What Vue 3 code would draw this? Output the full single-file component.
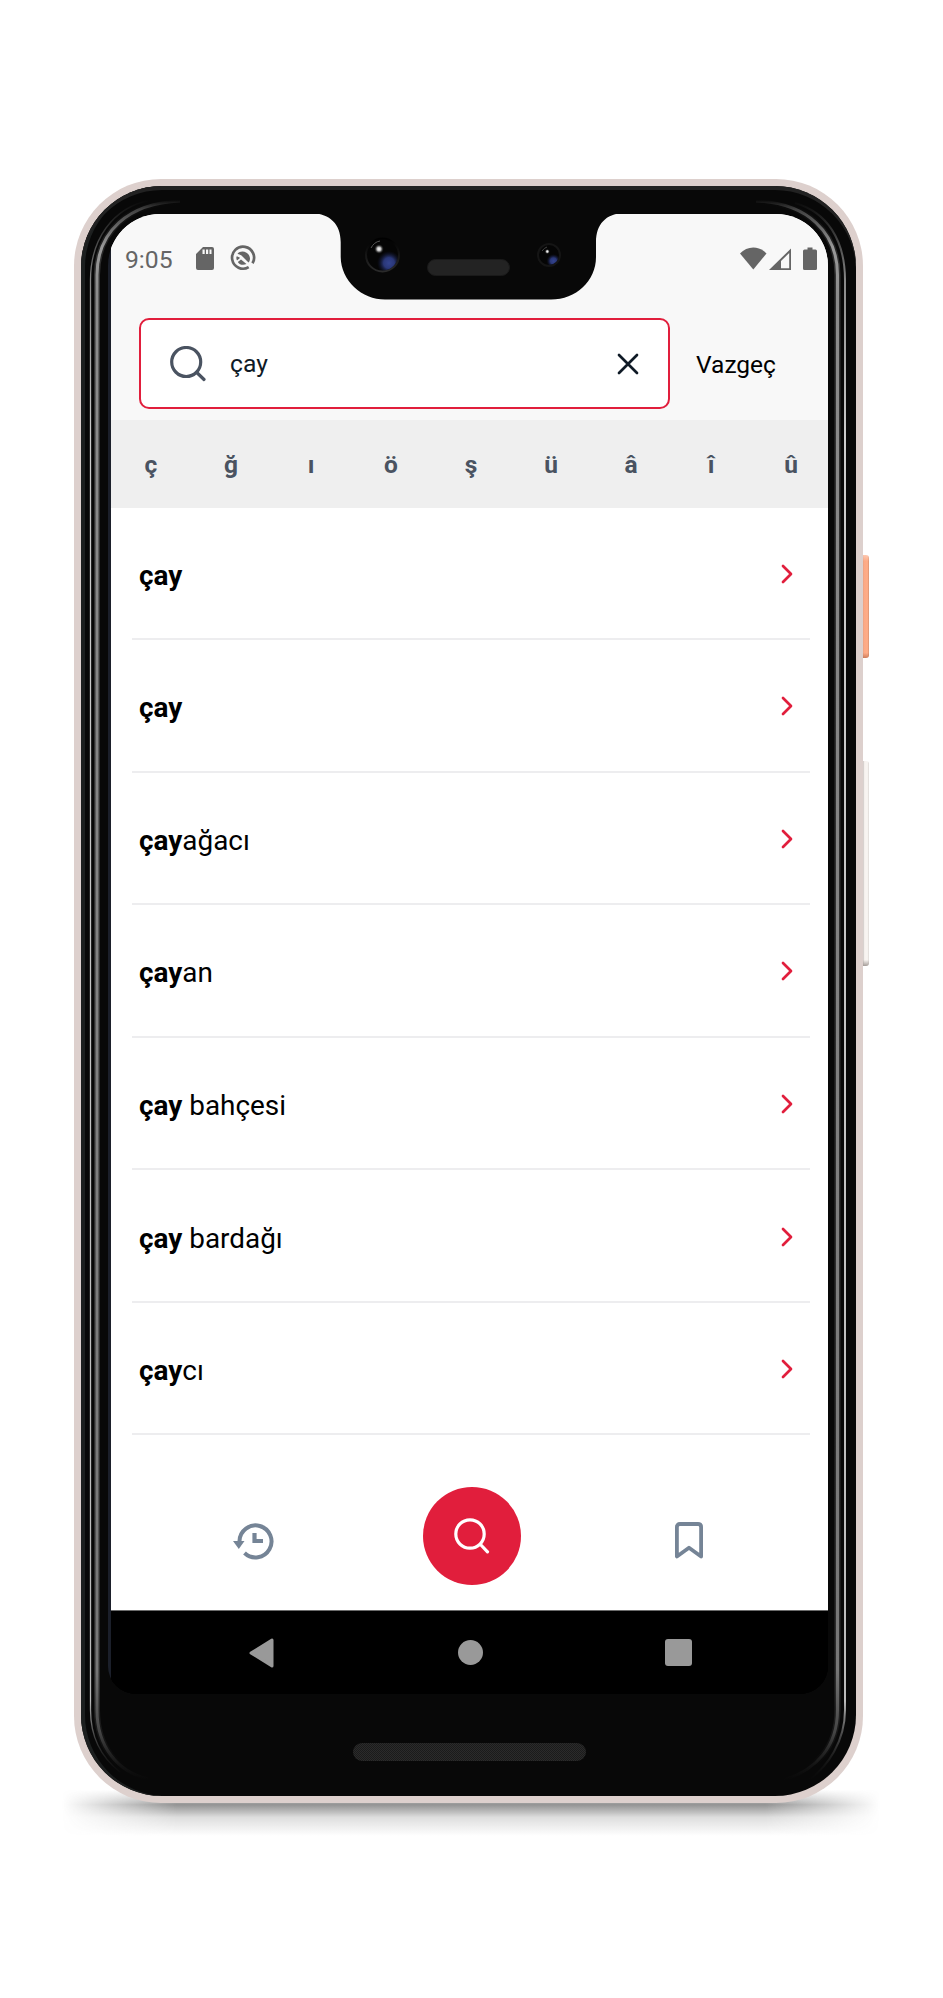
<script setup>
const letters = ['ç', 'ğ', 'ı', 'ö', 'ş', 'ü', 'â', 'î', 'û']
const results = ['', '', 'ağacı', 'an', ' bahçesi', ' bardağı', 'cı']
</script>

<template>
  <main class="stage">
    <div class="shadow"></div>
    <div class="side power"></div>
    <div class="side volume"></div>
    <div class="phone">
      <div class="body">
        <section class="screen">
          <div class="content">
            <header class="top">
              <div class="status">
                <span class="time">9:05</span>
                <svg class="sd" width="18" height="23" viewBox="0 0 18 23"><path fill="#656565" fill-rule="evenodd" d="M7 0H16Q18 0 18 2V21Q18 23 16 23H2Q0 23 0 21V7ZM6.500 2.500V7H8.700V2.500ZM10 2.500V7H12.200V2.500ZM13.500 2.500V7H15.500V2.500Z"/></svg>
                <svg class="q" width="26" height="26" viewBox="0 0 26 26"><path d="M18.700 22.100A11 11 0 1 1 22.500 18.300" fill="none" stroke="#656565" stroke-width="2.700"/><path fill="#656565" d="M7.500 8.500C11 4.500 19.500 6.500 20 13.500C20 15 19.500 16.500 18.500 17.500L11.500 10.500C10 9.500 9 9.600 7.500 8.500ZM6.500 11.500C8 11.500 9 12 10 13L7 15.500C6.300 14 6.200 13 6.500 11.500ZM7.800 17L11 14.500L16.500 19C13.500 20.500 9.500 20 7.800 17Z"/></svg>
                <span class="grow"></span>
                <svg width="78" height="24" viewBox="0 0 78 24"><g fill="#656565"><path d="M0 6.500C7 -1.500 19.500 -1.500 26.500 6.500L13.300 22.500Z"/><path fill-rule="evenodd" d="M51 1.500V23H29ZM49.200 6L41 14V21.200H49.200Z"/><path d="M67.500 0.500H72.500V2.500H75.500Q77 2.500 77 4V21.500Q77 23 75.500 23H64.500Q63 23 63 21.500V4Q63 2.500 64.500 2.500H67.500Z"/></g></svg>
              </div>
              <div class="searchrow">
                <div class="field">
                  <svg class="mag" width="36" height="36" viewBox="0 0 36 36" fill="none" stroke="#4a5361" stroke-width="3.200"><circle cx="16.200" cy="16" r="14.500"/><path d="M26.800 26.500L34 33.500" stroke-linecap="round"/></svg>
                  <span class="query">çay</span>
                  <svg class="x" width="22" height="22" viewBox="0 0 22 22" fill="none" stroke="#0f1a26" stroke-width="2.700" stroke-linecap="round"><path d="M2 2L20 20M20 2L2 20"/></svg>
                </div>
                <span class="cancel">Vazgeç</span>
              </div>
            </header>
            <div class="letters"><b v-for="l in letters" :key="l">{{ l }}</b></div>
            <ul class="list">
              <li v-for="(r, i) in results" :key="i">
                <span class="word"><b>çay</b>{{ r }}</span>
                <svg class="go" width="12" height="20" viewBox="0 0 12 20" fill="none" stroke="#e11e3c" stroke-width="2.700" stroke-linecap="round" stroke-linejoin="round"><path d="M2 2L10 10L2 18"/></svg>
              </li>
            </ul>
            <nav class="tabs">
              <svg class="history" width="41" height="38" viewBox="0 0 41 38"><path d="M6.500 20V19A16 16 0 1 1 11.500 31" fill="none" stroke="#758496" stroke-width="4"/><path d="M0 19H11.500L5.800 27Z" fill="#758496"/><path d="M21.500 11V19H30" fill="none" stroke="#758496" stroke-width="4.200"/></svg>
              <div class="fab"><svg width="36" height="36" viewBox="0 0 36 36" fill="none" stroke="#fff" stroke-width="3.200"><circle cx="16" cy="16" r="14.200"/><path d="M26.500 26.500L33.500 33.800" stroke-linecap="round"/></svg></div>
              <svg class="mark" width="28" height="37" viewBox="0 0 28 37" fill="none" stroke="#758496" stroke-width="3.800" stroke-linejoin="round"><path d="M1.900 34.500V5Q1.900 2 5 2H23Q26.100 2 26.100 5V34.500L14 25.700Z"/></svg>
            </nav>
            <nav class="android">
              <svg width="25" height="30" viewBox="0 0 25 30"><path d="M2 15L23 2V28Z" fill="#999" stroke="#999" stroke-width="3" stroke-linejoin="round"/></svg>
              <i class="home"></i>
              <i class="recent"></i>
            </nav>
          </div>
        </section>
        <div class="chin"><div class="speaker"></div></div>
      </div>
    </div>
    <svg class="hardware" width="943" height="1998" viewBox="0 0 943 1998">
      <defs>
        <linearGradient id="fade" gradientUnits="userSpaceOnUse" x1="0" y1="200" x2="0" y2="1780">
          <stop offset="0" stop-color="#777" stop-opacity="0"/><stop offset=".006" stop-color="#666" stop-opacity=".6"/><stop offset=".03" stop-color="#999"/><stop offset=".06" stop-color="#8c8c8c"/><stop offset=".93" stop-color="#777"/><stop offset=".97" stop-color="#444"/><stop offset="1" stop-color="#222" stop-opacity="0"/>
        </linearGradient>
        <linearGradient id="thin" gradientUnits="userSpaceOnUse" x1="0" y1="200" x2="0" y2="1780">
          <stop offset="0" stop-color="#777" stop-opacity="0"/><stop offset=".05" stop-color="#888"/><stop offset=".15" stop-color="#ccc"/><stop offset=".95" stop-color="#bbb"/><stop offset="1" stop-color="#222" stop-opacity="0"/>
        </linearGradient>
        <linearGradient id="halo" gradientUnits="userSpaceOnUse" x1="0" y1="203" x2="0" y2="1765">
          <stop offset="0" stop-color="#2c2c2c" stop-opacity="0"/><stop offset=".04" stop-color="#333"/><stop offset=".95" stop-color="#2c2c2c"/><stop offset="1" stop-color="#2c2c2c" stop-opacity="0"/>
        </linearGradient>
        <radialGradient id="blue"><stop offset="0" stop-color="#34448f"/><stop offset=".45" stop-color="#2a3778"/><stop offset="1" stop-color="#101530" stop-opacity="0"/></radialGradient>
        <radialGradient id="glint"><stop offset="0" stop-color="#fff"/><stop offset=".4" stop-color="#bbb"/><stop offset="1" stop-color="#111" stop-opacity="0"/></radialGradient>
        <linearGradient id="ring" x1="0" y1="0" x2="0" y2="1"><stop offset="0" stop-color="#000"/><stop offset="1" stop-color="#2a2a2a"/></linearGradient>
        <clipPath id="lensA"><circle cx="382.500" cy="255" r="15.500"/></clipPath>
        <clipPath id="lensB"><circle cx="549" cy="255" r="10"/></clipPath>
      </defs>
      <path fill="#080808" d="M312 213C330 214 340.700 224 340.700 242V257C341 281 362 299.500 385 299.500H551C576 299.500 596 281 596 257V242C596 224 606 214 623 213Z"/>
      <g fill="none">
        <path d="M180 201C128 203 97 232 97 275V1710C97 1747 118 1772 148 1779" stroke="url(#halo)" stroke-width="6"/>
        <path d="M180 201C128 203 97 232 97 275V1710C97 1747 118 1772 148 1779" stroke="url(#fade)" stroke-width="3"/>
        <path d="M150 200C112 208 90.500 240 90.500 280V1710C90.500 1738 102 1758 120 1772" stroke="url(#thin)" stroke-width="1.300"/>
        <path d="M756 201C807 203 837.500 232 837.500 275V1710C837.500 1747 816 1770 784 1780" stroke="url(#halo)" stroke-width="6"/>
        <path d="M756 201C807 203 837.500 232 837.500 275V1710C837.500 1747 816 1770 784 1780" stroke="url(#fade)" stroke-width="3"/>
        <path d="M795 203C827 212 845 240 845 280V1710C845 1740 829 1767 805 1783" stroke="url(#thin)" stroke-width="2"/>
      </g>
      <circle cx="382.500" cy="255" r="16.500" fill="#050505" stroke="url(#ring)" stroke-width="2"/>
      <circle cx="389" cy="263" r="12" fill="url(#blue)" clip-path="url(#lensA)"/>
      <circle cx="379" cy="249" r="5" fill="url(#glint)"/>
      <path d="M371 248Q374 242 380 241" fill="none" stroke="#555" stroke-width="1"/>
      <circle cx="549" cy="255" r="11" fill="#050505" stroke="#151515" stroke-width="2"/>
      <circle cx="553.500" cy="261" r="7" fill="url(#blue)" clip-path="url(#lensB)"/>
      <circle cx="547.300" cy="251.500" r="2.600" fill="url(#glint)"/>
      <path d="M542 251Q544 248 547 247" fill="none" stroke="#444" stroke-width="1"/>
      <rect x="427.500" y="259.500" width="82" height="16" rx="8" fill="#232323" stroke="#1a1a1a"/>
    </svg>
  </main>
</template>

<style>
body { background: #fff; }
</style>
<style scoped>
* { box-sizing: border-box; }
.stage { position: relative; width: 943px; height: 1998px; padding: 179px 80px 0 74px; overflow: hidden; background: #fff; font-family: Roboto, "Noto Sans", sans-serif; color: #000; }
.shadow { position: absolute; left: 62px; top: 1778px; width: 818px; height: 58px; background: linear-gradient(180deg, rgba(90, 90, 90, 0) 20%, rgba(90, 90, 90, .65) 46%, rgba(90, 90, 90, .2) 68%, rgba(90, 90, 90, 0)); mask-image: linear-gradient(90deg, transparent, #000 14%, #000 86%, transparent); }
.side { position: absolute; left: 861px; width: 8px; border-radius: 0 3px 3px 0; }
.power { top: 555px; height: 103px; background: linear-gradient(180deg, rgba(255, 220, 205, .6), transparent 6%, transparent 95%, rgba(160, 80, 50, .5)), linear-gradient(90deg, #e9a283 25%, #fca985 40%, #ffad88 80%, #d8906e); }
.volume { top: 761px; height: 205px; background: linear-gradient(180deg, transparent 97%, #a49c98), linear-gradient(90deg, #d8d2cf 35%, #f8f3f0 45%, #f8f5f2 80%, #ddd8d5); }
.phone { position: relative; width: 789px; height: 1624px; padding: 7px; border-radius: 87px; background: #ddd0cd; }
.body { width: 775px; height: 1610px; border-radius: 81px; background: #080808; padding: 28px 28px 0 27px; box-shadow: inset 0 4px 0 #222, inset 4px 0 0 #1c1f1f; }
.screen { width: 720px; height: 1480px; border-radius: 52px 52px 28px 28px; background: linear-gradient(90deg, #1b1f2a 3px, #000 3px); overflow: hidden; padding-left: 3px; }
.content { display: flex; flex-direction: column; width: 717px; height: 1480px; background: linear-gradient(#fff 1396px, #000 1396px); }
.top { height: 205.500px; background: #f8f8f8; }
.status { display: flex; height: 104px; padding: 33px 10px 0 14px; align-items: flex-start; }
.time { width: 71px; font-size: 24.700px; line-height: 25px; color: #656565; }
.q { margin: -2px 0 0 16px; }
.grow { flex: 1; }
.searchrow { display: flex; align-items: center; padding-left: 28px; }
.field { display: flex; align-items: center; width: 531px; height: 91px; padding: 0 29px 0 29px; border: 2px solid #e11e3c; border-radius: 10px; background: #fff; }
.query { flex: 1; margin-left: 24px; font-size: 24.700px; color: #0f1a26; }
.cancel { margin-left: 26px; padding-top: 1px; font-size: 24.500px; }
.letters { display: grid; grid-template-columns: repeat(9, 80px); height: 88px; padding-top: 2px; align-items: center; overflow: hidden; background: #efefef; font-size: 24.500px; color: #4a5361; text-align: center; }
.list { list-style: none; margin: 0; padding: 0 18px 0 21px; }
.list li { display: flex; justify-content: space-between; align-items: center; height: 132.550px; padding: 1px 17px 0 7px; border-bottom: 2px solid #ededef; }
.word { font-size: 27.900px; white-space: pre; padding-top: 4px; }
.go { margin-top: 1px; }
.tabs { display: flex; justify-content: space-between; align-items: center; flex: 1; padding: 40px 125px 12px 122px; }
.history, .mark { margin-top: 9px; }
.fab { display: flex; align-items: center; justify-content: center; width: 98px; height: 98px; margin-right: 6px; border-radius: 50%; background: #e11e3c; }
.android { display: flex; justify-content: space-between; align-items: center; height: 84.500px; padding: 1px 136px 0 138px; background: #000; border-top: 1px solid #6c6c6c; }
.home { width: 25px; height: 25px; margin-left: 2px; border-radius: 50%; background: #999; }
.recent { width: 27px; height: 27px; border-radius: 3px; background: #999; }
.chin { padding: 49px 0 0 245px; }
.speaker { width: 233px; height: 18px; border-radius: 9px; background: repeating-conic-gradient(#2b2b2b 0 25%, #1b1b1b 0 50%) 0 0 / 2px 2px; }
.hardware { position: absolute; left: 0; top: 0; }
</style>
